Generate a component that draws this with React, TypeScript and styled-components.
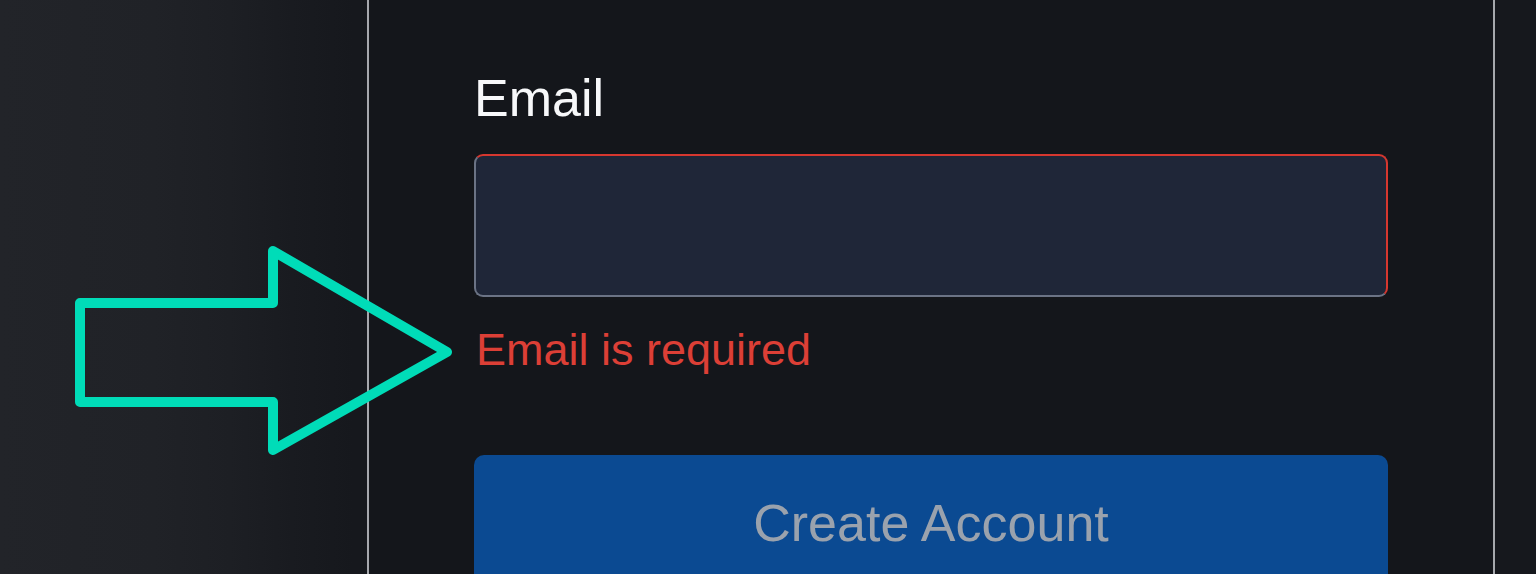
import React from "react";
import styled, { createGlobalStyle } from "styled-components";

const Global = createGlobalStyle`
  html, body {
    margin: 0;
    padding: 0;
    height: 100%;
    overflow: hidden;
  }
  body {
    font-family: "Liberation Sans", Arial, sans-serif;
    background: linear-gradient(
      to right,
      #222429 0%,
      #202227 10%,
      #1d1f24 15%,
      #191b20 19%,
      #16181d 23%,
      #16181d 100%
    );
  }
`;

const Page = styled.div`
  position: relative;
  display: flex;
  height: 574px;
  overflow: hidden;
`;

const Card = styled.div`
  margin-left: 367px;
  width: 1128px;
  height: 574px;
  box-sizing: border-box;
  border-left: 2px solid #a6a8ad;
  border-right: 2px solid #a6a8ad;
  background: #14161b;
  padding: 68px 0 0 105px;
  display: flex;
  flex-direction: column;
  overflow: hidden;

  & > * {
    flex-shrink: 0;
  }
`;

const Label = styled.label`
  font-size: 52px;
  line-height: 60px;
  color: #f7f8fa;
`;

const Input = styled.div`
  margin-top: 26px;
  width: 914px;
  height: 143px;
  box-sizing: border-box;
  background: #1f2638;
  border-radius: 9px;
  border: 2px solid #6b7385;
  border-top-color: #d6372f;
  border-right-color: #d6372f;
`;

const ErrorText = styled.div`
  margin-top: 27px;
  font-size: 45px;
  line-height: 52px;
  color: #dc3f36;
  padding-left: 2px;
`;

const Button = styled.button`
  margin-top: 79px;
  width: 914px;
  height: 140px;
  border: none;
  border-radius: 10px;
  background: #0b4a92;
  color: #9aa2ad;
  font-family: "Liberation Sans", Arial, sans-serif;
  font-size: 52px;
  line-height: 60px;
  padding: 38px 0 0 0;
  display: flex;
  justify-content: center;
  align-items: flex-start;
`;

const ArrowOverlay = styled.svg`
  position: absolute;
  left: 0;
  top: 0;
  pointer-events: none;
`;

export default function App() {
  return (
    <>
      <Global />
      <Page>
        <Card>
          <Label>Email</Label>
          <Input />
          <ErrorText>Email is required</ErrorText>
          <Button>Create Account</Button>
        </Card>
        <ArrowOverlay width="470" height="574" viewBox="0 0 470 574">
          <polygon
            points="80,303 273,303 273,251 447,352 273,450 273,402 80,402"
            fill="none"
            stroke="#00dcb8"
            strokeWidth="10"
            strokeLinejoin="round"
          />
        </ArrowOverlay>
      </Page>
    </>
  );
}
